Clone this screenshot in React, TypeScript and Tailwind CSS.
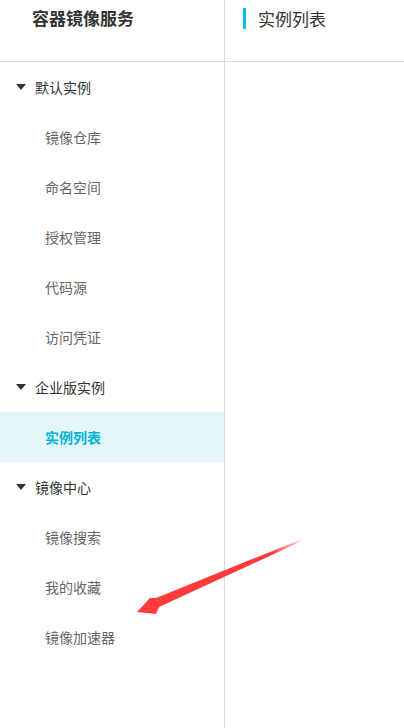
const groups = [
  { title: "默认实例", items: ["镜像仓库", "命名空间", "授权管理", "代码源", "访问凭证"] },
  { title: "企业版实例", items: ["实例列表"] },
  { title: "镜像中心", items: ["镜像搜索", "我的收藏", "镜像加速器"] },
];

const active = "实例列表";

function Caret() {
  return (
    <svg width="10" height="6" viewBox="0 0 10 6" className="mr-[9px]">
      <path d="M0 0 H10 L5 6 Z" fill="#333" />
    </svg>
  );
}

export default function App() {
  return (
    <div
      className="relative flex h-[728px] w-[404px] overflow-hidden bg-white"
      style={{ fontFamily: '"Noto Sans CJK SC", "Noto Sans", sans-serif' }}
    >
      {/* sidebar */}
      <div className="flex w-[225px] shrink-0 flex-col border-r border-[#d9d9d9]">
        <div className="h-[62px] border-b border-[#dcdcdc] pl-[32px] pt-[6px] text-[17px] font-bold leading-[24px] text-[#333]">
          容器镜像服务
        </div>
        {groups.map((g) => (
          <div key={g.title}>
            <div className="flex h-[50px] items-center pl-[16px] text-[14px] text-[#333]">
              <Caret />
              {g.title}
            </div>
            {g.items.map((it) =>
              it === active ? (
                <div
                  key={it}
                  className="flex h-[50px] items-center bg-[#e3f6fa] pl-[45px] text-[14px] font-bold text-[#00b4d8]"
                >
                  {it}
                </div>
              ) : (
                <div key={it} className="flex h-[50px] items-center pl-[45px] text-[14px] text-[#666]">
                  {it}
                </div>
              )
            )}
          </div>
        ))}
      </div>

      {/* main */}
      <div className="flex-1">
        <div className="h-[62px] border-b border-[#dcdcdc] pl-[18px] pt-[8px]">
          <div className="flex items-center border-l-[3px] border-[#00c1de] pl-[12px] text-[17px] leading-[21px] text-[#333]">
            实例列表
          </div>
        </div>
      </div>

      {/* annotation arrow */}
      <svg className="pointer-events-none absolute left-0 top-0" width="404" height="728">
        <defs>
          <linearGradient id="fade" x1="302" y1="540" x2="150" y2="605" gradientUnits="userSpaceOnUse">
            <stop offset="0" stopColor="#ff3b3b" stopOpacity="0.1" />
            <stop offset="0.2" stopColor="#ff3b3b" stopOpacity="1" />
            <stop offset="1" stopColor="#ff3b3b" />
          </linearGradient>
        </defs>
        <path d="M302 539 L156 598 L150 598 L137 612 L156 614 L159 607 L302 541 Z" fill="url(#fade)" />
      </svg>
    </div>
  );
}
